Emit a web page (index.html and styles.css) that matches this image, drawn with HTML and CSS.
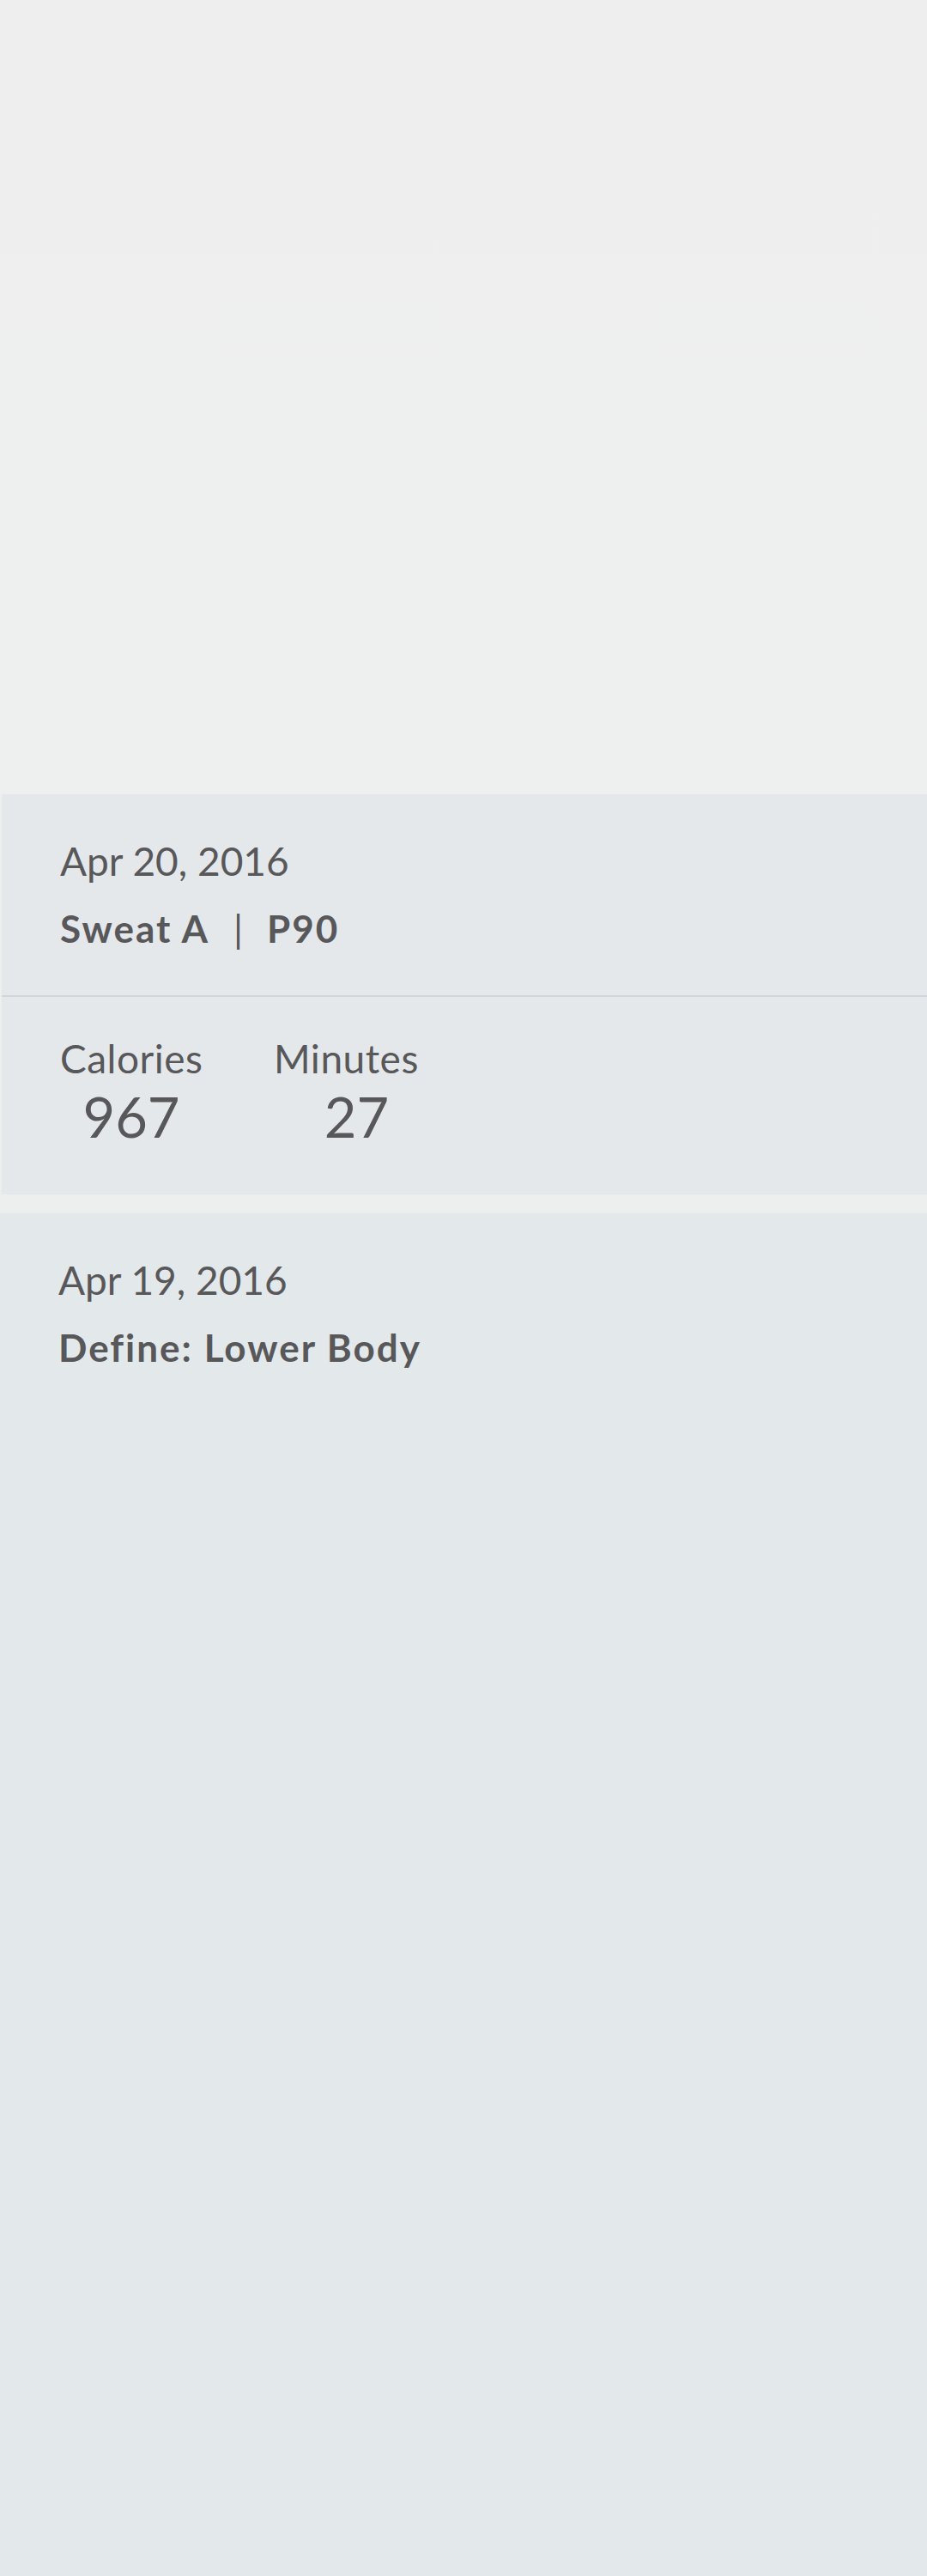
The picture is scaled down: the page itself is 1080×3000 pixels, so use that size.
FILE: index.html
```html
<!DOCTYPE html>
<html lang="en">
<head>
<meta charset="utf-8">
<title>Workout History</title>
<link rel="stylesheet" href="styles.css">
</head>
<body>
<div class="page">
  <div class="hero"></div>
  <section class="card card-first">
    <div class="card-head">
      <div class="date">Apr 20, 2016</div>
      <div class="title">Sweat A<span class="sep">|</span>P90</div>
    </div>
    <div class="stats">
      <div class="stat stat-cal">
        <div class="stat-label">Calories</div>
        <div class="stat-value">967</div>
      </div>
      <div class="stat stat-min">
        <div class="stat-label">Minutes</div>
        <div class="stat-value">27</div>
      </div>
    </div>
  </section>
  <section class="card card-second">
    <div class="card-head">
      <div class="date">Apr 19, 2016</div>
      <div class="title">Define: Lower Body</div>
    </div>
  </section>
</div>
</body>
</html>
```

FILE: styles.css
```css
html, body {
  margin: 0;
  padding: 0;
}
body {
  background: #edeeee;
  font-family: Lato, "Open Sans", "Liberation Sans", sans-serif;
  color: #58585a;
}
.page {
  width: 1080px;
  height: 3000px;
  display: flex;
  flex-direction: column;
  background: #edeeee;
}
.hero {
  height: 925px;
  flex: none;
  background: linear-gradient(#edeeed, #eeefef);
}
.card {
  background: #e4e8eb;
  flex: none;
}
.card-first {
  margin-left: 2px;
  margin-bottom: 22px;
}
.card-head {
  padding: 50px 0 0 68px;
  height: 184px;
  border-bottom: 2px solid #d2d6da;
}
.card-second .card-head {
  border-bottom: none;
}
.card-second {
  flex: 1;
  background: #e3e8eb;
}
.date {
  font-size: 46px;
  line-height: 55px;
  font-weight: 400;
}
.title {
  margin-top: 25px;
  font-size: 44px;
  line-height: 53px;
  font-weight: 700;
  letter-spacing: 2px;
}
.sep {
  font-weight: 400;
  margin: 0 26px 0 28px;
}
.stats {
  display: grid;
  grid-template-columns: 166px 193px;
  column-gap: 83px;
  padding: 44px 0 0 68px;
  height: 186px;
}
.stat-label {
  font-size: 46px;
  line-height: 55px;
  letter-spacing: 0.5px;
}
.stat-value {
  margin-top: 4px;
  font-size: 65px;
  line-height: 72px;
  text-align: center;
}
```
